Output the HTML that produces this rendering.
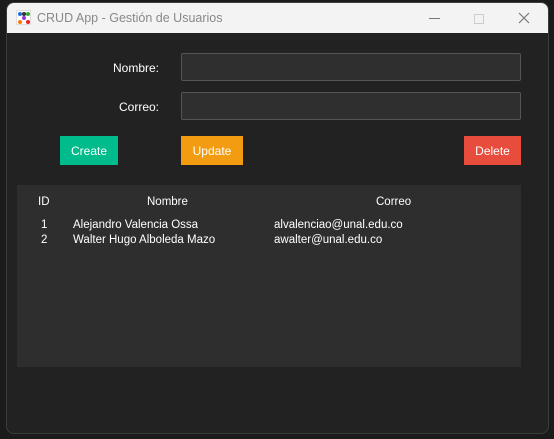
<!DOCTYPE html><html><head><style>
body{margin:0;width:554px;height:439px;background:#1b1b1b;position:relative;overflow:hidden;font-family:"Liberation Sans","DejaVu Sans",sans-serif;font-size:11.5px;color:#fff}
.win{position:absolute;left:6px;top:2px;width:541px;height:430px;border:1px solid #3c3c3c;border-radius:8px;background:#222;overflow:hidden}
.tb{position:absolute;left:0;top:0;right:0;height:30px;background:#f3f3f3}
.a{position:absolute}
.lbl{position:absolute;text-align:right;width:100px;font-size:12px}
.in{position:absolute;left:174px;width:338px;height:26px;background:#2f2f2f;border:1px solid #555;border-radius:2px}
.btn{position:absolute;top:133px;height:29px;line-height:30px;text-align:center;font-size:12px}
.dot{position:absolute;width:4px;height:4px;border-radius:50%}
</style></head><body>
<div class="win">
<div class="tb">
<div class="a" style="left:9px;top:7px;width:15px;height:15px;background:#fff;border:1px solid #ddd;box-sizing:border-box"></div>
<div class="dot" style="left:11px;top:9px;background:#1e6fe0"></div><div class="dot" style="left:15px;top:9px;background:#333"></div><div class="dot" style="left:19px;top:9px;background:#3a3"></div>
<div class="dot" style="left:15px;top:13px;background:#93c"></div>
<div class="dot" style="left:11px;top:17px;background:#f70"></div><div class="dot" style="left:19px;top:17px;background:#e22"></div>
<div class="a" style="left:30px;top:8px;color:#888;font-size:12.5px">CRUD App - Gestión de Usuarios</div>
<div class="a" style="left:422px;top:15px;width:11px;height:1px;background:#777"></div>
<div class="a" style="left:467px;top:11px;width:8px;height:8px;border:1px solid #ccc"></div>
<svg class="a" style="left:511px;top:9px" width="12" height="12"><path d="M1 1L11 11M11 1L1 11" stroke="#777" stroke-width="1.2"/></svg>
</div>
<div class="lbl" style="left:52px;top:58px">Nombre:</div>
<div class="lbl" style="left:52px;top:97px">Correo:</div>
<div class="in" style="top:50px"></div>
<div class="in" style="top:89px"></div>
<div class="btn" style="left:53px;width:58px;background:#00bb8c">Create</div>
<div class="btn" style="left:174px;width:62px;background:#f39c12">Update</div>
<div class="btn" style="left:457px;width:57px;background:#e74c3c">Delete</div>
<div class="a" style="left:10px;top:182px;width:504px;height:182px;background:#2e2e2e">
<div class="a" style="left:21px;top:11px">ID</div>
<div class="a" style="left:130px;top:11px">Nombre</div>
<div class="a" style="left:359px;top:11px">Correo</div>
<div class="a" style="left:24px;top:34px">1</div>
<div class="a" style="left:56px;top:34px">Alejandro Valencia Ossa</div>
<div class="a" style="left:257px;top:34px">alvalenciao@unal.edu.co</div>
<div class="a" style="left:24px;top:49px">2</div>
<div class="a" style="left:56px;top:49px">Walter Hugo Alboleda Mazo</div>
<div class="a" style="left:257px;top:49px">awalter@unal.edu.co</div>
</div>
</div>
</body></html>
